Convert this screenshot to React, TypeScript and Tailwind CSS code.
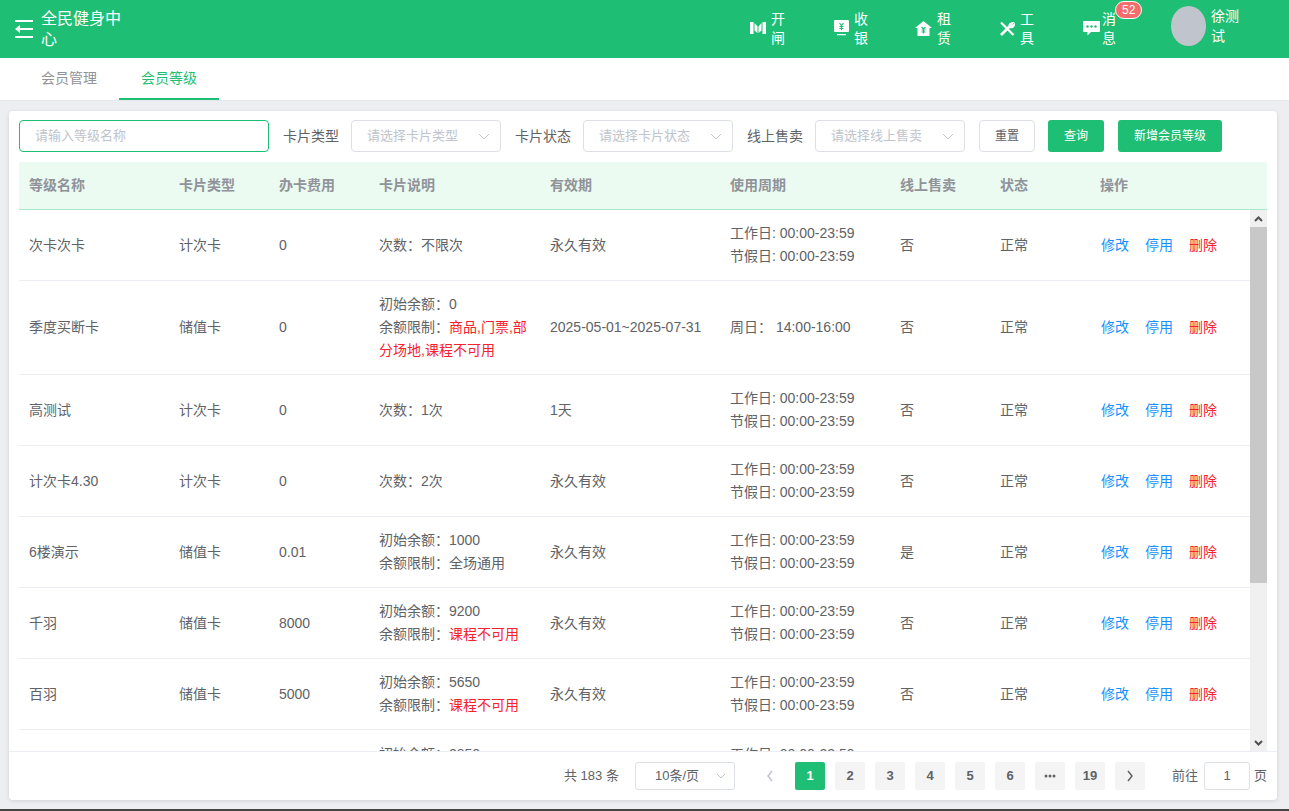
import React from "react";

const FONT = "font-['Liberation_Sans','Noto_Sans_CJK_SC',sans-serif]";

const GateIcon = () => (
  <svg width="16" height="14" viewBox="0 0 16 14" fill="white">
    <path d="M0 1h3.500v12H0zM12.500 1H16v12h-3.500zM4.500 2l3 3.500V12l-3-2.500zM11.500 2l-3 3.500V12l3-2.500z" />
  </svg>
);
const CashIcon = () => (
  <svg width="15" height="16" viewBox="0 0 15 16">
    <path fill="white" d="M1 0h13a1 1 0 0 1 1 1v10a1 1 0 0 1-1 1H1a1 1 0 0 1-1-1V1a1 1 0 0 1 1-1zM3 14h9v1.300H3z" />
    <path stroke="#1fbe75" strokeWidth="1.200" fill="none" d="M5.500 3l2 2.500 2-2.500M7.500 5.500V10M5.500 6.500h4M5.500 8.500h4" />
  </svg>
);
const HouseIcon = () => (
  <svg width="17" height="15" viewBox="0 0 17 15">
    <path fill="white" d="M8.500 0L17 7h-2.500v8h-12V7H0z" />
    <path stroke="#1fbe75" strokeWidth="1.100" fill="none" d="M6.500 6l2 2 2-2M8.500 8v4.500M6.500 9h4M6.500 11h4" />
  </svg>
);
const ToolIcon = () => (
  <svg width="15" height="15" viewBox="0 0 15 15" fill="none" stroke="white">
    <path strokeWidth="2.200" d="M1 1.500l12.500 12.500" />
    <path strokeWidth="2.600" d="M1 14l8-8" />
    <path strokeWidth="1.200" d="M9 6c-.5-2 1-4.500 4.500-4.500L11.500 4l1 1 2-2c0 3-2.500 4.500-5.500 3z" fill="white" />
  </svg>
);
const ChatIcon = () => (
  <svg width="17" height="15" viewBox="0 0 17 15">
    <path fill="white" d="M1 0h15a1 1 0 0 1 1 1v9a1 1 0 0 1-1 1H8l-3.500 3.500V11H1a1 1 0 0 1-1-1V1a1 1 0 0 1 1-1z" />
    <circle cx="4.500" cy="5.500" r="1.200" fill="#1fbe75" />
    <circle cx="8.500" cy="5.500" r="1.200" fill="#1fbe75" />
    <circle cx="12.500" cy="5.500" r="1.200" fill="#1fbe75" />
  </svg>
);
const Chevron = () => (
  <svg width="12" height="7" viewBox="0 0 12 7" fill="none" stroke="#c0c4cc" strokeWidth="1">
    <path d="M1 1l5 5 5-5" />
  </svg>
);

function NavItem({ icon, a, b }: { icon: React.ReactNode; a: string; b: string }) {
  return (
    <div className="flex items-center w-[83px]">
      <div className="w-[21px] mb-[2px] pr-[4px] flex justify-end">{icon}</div>
      <div className="w-[16px] text-[14px] leading-[19px] text-white text-center">
        <div>{a}</div>
        <div>{b}</div>
      </div>
    </div>
  );
}

function Select({ placeholder, width }: { placeholder: string; width: string }) {
  return (
    <div className={`${width} h-[32px] rounded-[4px] border border-[#dcdfe6] bg-white flex items-center justify-between pl-[15px] pr-[10px]`}>
      <span className="text-[13px] text-[#c0c4cc] whitespace-nowrap">{placeholder}</span>
      <Chevron />
    </div>
  );
}

type Row = {
  name: string;
  type: string;
  fee: string;
  desc: React.ReactNode;
  period: string;
  cycle: React.ReactNode;
  online: string;
  height: string;
};

const Weekly = (
  <>
    <div>工作日: 00:00-23:59</div>
    <div>节假日: 00:00-23:59</div>
  </>
);
const Red = ({ children }: { children: React.ReactNode }) => <span className="text-[#f5222d]">{children}</span>;

const rows: Row[] = [
  { name: "次卡次卡", type: "计次卡", fee: "0", desc: <div>次数：不限次</div>, period: "永久有效", cycle: Weekly, online: "否", height: "h-[71px]" },
  {
    name: "季度买断卡",
    type: "储值卡",
    fee: "0",
    desc: (
      <>
        <div>初始余额：0</div>
        <div>
          余额限制：<Red>商品,门票,部分场地,课程不可用</Red>
        </div>
      </>
    ),
    period: "2025-05-01~2025-07-31",
    cycle: <div>周日： 14:00-16:00</div>,
    online: "否",
    height: "h-[94px]",
  },
  { name: "高测试", type: "计次卡", fee: "0", desc: <div>次数：1次</div>, period: "1天", cycle: Weekly, online: "否", height: "h-[71px]" },
  { name: "计次卡4.30", type: "计次卡", fee: "0", desc: <div>次数：2次</div>, period: "永久有效", cycle: Weekly, online: "否", height: "h-[71px]" },
  {
    name: "6楼演示",
    type: "储值卡",
    fee: "0.01",
    desc: (
      <>
        <div>初始余额：1000</div>
        <div>余额限制：全场通用</div>
      </>
    ),
    period: "永久有效",
    cycle: Weekly,
    online: "是",
    height: "h-[71px]",
  },
  {
    name: "千羽",
    type: "储值卡",
    fee: "8000",
    desc: (
      <>
        <div>初始余额：9200</div>
        <div>
          余额限制：<Red>课程不可用</Red>
        </div>
      </>
    ),
    period: "永久有效",
    cycle: Weekly,
    online: "否",
    height: "h-[71px]",
  },
  {
    name: "百羽",
    type: "储值卡",
    fee: "5000",
    desc: (
      <>
        <div>初始余额：5650</div>
        <div>
          余额限制：<Red>课程不可用</Red>
        </div>
      </>
    ),
    period: "永久有效",
    cycle: Weekly,
    online: "否",
    height: "h-[71px]",
  },
];

const Cell = ({ w, children }: { w: string; children: React.ReactNode }) => (
  <div className={`${w} shrink-0 px-[10px] leading-[23px]`}>{children}</div>
);

function TableRow({ r }: { r: Row }) {
  return (
    <div className={`${r.height} shrink-0 flex items-center border-b border-[#ebeef5] text-[14px] text-[#606266]`}>
      <Cell w="w-[150px]">{r.name}</Cell>
      <Cell w="w-[100px]">{r.type}</Cell>
      <Cell w="w-[100px]">{r.fee}</Cell>
      <Cell w="w-[171px]">{r.desc}</Cell>
      <Cell w="w-[180px]">{r.period}</Cell>
      <Cell w="w-[170px]">{r.cycle}</Cell>
      <Cell w="w-[100px]">{r.online}</Cell>
      <Cell w="w-[100px]">正常</Cell>
      <div className="w-[150px] shrink-0 pl-[11px] flex gap-[16px] leading-[23px]">
        <span className="text-[#1890ff]">修改</span>
        <span className="text-[#1890ff]">停用</span>
        <span className="text-[#f5222d]">删除</span>
      </div>
    </div>
  );
}

const Head = ({ w, children }: { w: string; children: React.ReactNode }) => (
  <div className={`${w} shrink-0 px-[10px]`}>{children}</div>
);

function PageBtn({ children, active }: { children: React.ReactNode; active?: boolean }) {
  return (
    <div
      className={`w-[30px] h-[28px] rounded-[2px] flex items-center justify-center text-[13px] font-bold ${
        active ? "bg-[#1fbe75] text-white" : "bg-[#f4f4f5] text-[#606266]"
      }`}
    >
      {children}
    </div>
  );
}

export default function App() {
  return (
    <div className={`${FONT} w-[1289px] h-[811px] overflow-hidden bg-[#eceef2] flex flex-col`}>
      <header className="h-[58px] shrink-0 bg-[#1fbe75] flex items-center text-white">
        <div className="w-[41px] pl-[15px] shrink-0">
          <svg width="18" height="18" viewBox="0 0 18 18" fill="white">
            <path d="M0 0h18v2H0zM5 8h13v2H5zM0 16h18v2H0zM0 9l5-4v8z" />
          </svg>
        </div>
        <div className="w-[86px] text-[16px] leading-[21px]">全民健身中心</div>
        <div className="ml-[622px] flex items-center">
          <NavItem icon={<GateIcon />} a="开" b="闸" />
          <NavItem icon={<CashIcon />} a="收" b="银" />
          <NavItem icon={<HouseIcon />} a="租" b="赁" />
          <NavItem icon={<ToolIcon />} a="工" b="具" />
          <div className="relative flex items-center w-[89px]">
            <div className="w-[20px] mb-[2px] pl-[2px]">
              <ChatIcon />
            </div>
            <div className="w-[16px] text-[14px] leading-[19px] text-center">
              <div>消</div>
              <div>息</div>
            </div>
            <div className="absolute left-[34px] top-[-9px] h-[18px] px-[6px] rounded-[9px] bg-[#f56c6c] border border-white text-[12px] leading-[16px] text-white">
              52
            </div>
          </div>
          <div className="w-[35px] h-[40px] ml-[1px] mb-[6px] rounded-[50%] bg-[#c0c4cc] shrink-0" />
          <div className="ml-[5px] mb-[6px] w-[30px] text-[14px] leading-[20px]">徐测试</div>
        </div>
      </header>

      <nav className="h-[43px] shrink-0 bg-white border-b border-[#e4e7ed] flex text-[14px] pl-[19px]">
        <div className="w-[100px] h-[42px] pb-[2px] flex items-center justify-center text-[#909399]">会员管理</div>
        <div className="w-[100px] h-[42px] flex items-center justify-center text-[#1fbe75] border-b-2 border-[#1fbe75]">会员等级</div>
      </nav>

      <main className="mt-[10px] mx-[9px] w-[1268px] h-[689px] bg-white rounded-[4px] shadow-[0_1px_4px_rgba(0,0,0,0.12)] flex flex-col shrink-0 overflow-hidden">
        <div className="h-[51px] pt-[9px] px-[10px] shrink-0 flex items-start text-[14px]">
          <div className="w-[250px] h-[32px] rounded-[4px] border border-[#1fbe75] pl-[15px] flex items-center text-[13px] text-[#c0c4cc]">
            请输入等级名称
          </div>
          <span className="ml-[14px] w-[56px] leading-[32px] text-[#606266]">卡片类型</span>
          <div className="ml-[12px]"><Select placeholder="请选择卡片类型" width="w-[150px]" /></div>
          <span className="ml-[14px] w-[56px] leading-[32px] text-[#606266]">卡片状态</span>
          <div className="ml-[12px]"><Select placeholder="请选择卡片状态" width="w-[150px]" /></div>
          <span className="ml-[14px] w-[56px] leading-[32px] text-[#606266]">线上售卖</span>
          <div className="ml-[12px]"><Select placeholder="请选择线上售卖" width="w-[150px]" /></div>
          <div className="ml-[14px] w-[56px] h-[32px] rounded-[4px] border border-[#dcdfe6] flex items-center justify-center text-[12px] text-[#606266]">重置</div>
          <div className="ml-[13px] w-[56px] h-[32px] rounded-[3px] bg-[#1fbe75] flex items-center justify-center text-[12px] text-white">查询</div>
          <div className="ml-[14px] w-[104px] h-[32px] rounded-[3px] bg-[#1fbe75] flex items-center justify-center text-[12px] text-white">新增会员等级</div>
        </div>

        <div className="mx-[10px] h-[48px] shrink-0 bg-[#ebfbf1] border-b border-[#a9e8c8] flex items-center text-[14px] font-bold text-[#909399]">
          <Head w="w-[150px]">等级名称</Head>
          <Head w="w-[100px]">卡片类型</Head>
          <Head w="w-[100px]">办卡费用</Head>
          <Head w="w-[171px]">卡片说明</Head>
          <Head w="w-[180px]">有效期</Head>
          <Head w="w-[170px]">使用周期</Head>
          <Head w="w-[100px]">线上售卖</Head>
          <Head w="w-[100px]">状态</Head>
          <Head w="w-[100px]">操作</Head>
        </div>

        <div className="mx-[10px] h-[541px] shrink-0 flex overflow-hidden">
          <div className="w-[1231px] shrink-0 overflow-hidden">
            {rows.map((r) => (
              <TableRow key={r.name} r={r} />
            ))}
            <div className="h-[71px] flex items-center text-[14px] text-[#606266]">
              <div className="w-[350px] shrink-0" />
              <Cell w="w-[171px]">
                <div>初始余额：2850</div>
                <div>余额限制：课程不可用</div>
              </Cell>
              <div className="w-[180px] shrink-0" />
              <Cell w="w-[170px]">{Weekly}</Cell>
            </div>
          </div>
          <div className="w-[17px] shrink-0 bg-[#f0f0f0] flex flex-col items-center">
            <div className="h-[17px] shrink-0 flex items-center justify-center">
              <svg width="9" height="6" viewBox="0 0 9 6" fill="none" stroke="#505050" strokeWidth="2">
                <path d="M1 5l3.500-3.500L8 5" />
              </svg>
            </div>
            <div className="w-[17px] h-[356px] bg-[#c8c8c8]" />
            <div className="flex-1" />
            <div className="h-[17px] shrink-0 flex items-center justify-center">
              <svg width="9" height="6" viewBox="0 0 9 6" fill="none" stroke="#505050" strokeWidth="2">
                <path d="M1 1l3.500 3.500L8 1" />
              </svg>
            </div>
          </div>
        </div>

        <div className="flex-1 border-t border-[#ebeef5] flex items-center text-[13px] text-[#606266] pl-[555px]">
          <span className="w-[56px] whitespace-nowrap">共 183 条</span>
          <div className="ml-[15px] w-[100px] h-[28px] rounded-[3px] border border-[#dcdfe6] flex items-center justify-between pl-[19px] pr-[8px]">
            <span className="whitespace-nowrap">10条/页</span>
            <svg width="10" height="6" viewBox="0 0 10 6" fill="none" stroke="#c0c4cc"><path d="M1 1l4 4 4-4" /></svg>
          </div>
          <div className="ml-[20px] w-[30px] h-[28px] flex items-center justify-center">
            <svg width="8" height="12" viewBox="0 0 8 12" fill="none" stroke="#c0c4cc" strokeWidth="1.500"><path d="M6 1L2 6l4 5" /></svg>
          </div>
          <div className="ml-[10px] flex gap-[10px]">
            <PageBtn active>1</PageBtn>
            <PageBtn>2</PageBtn>
            <PageBtn>3</PageBtn>
            <PageBtn>4</PageBtn>
            <PageBtn>5</PageBtn>
            <PageBtn>6</PageBtn>
            <PageBtn>
              <svg width="12" height="4" viewBox="0 0 12 4" fill="#606266">
                <circle cx="2" cy="2" r="1.500" /><circle cx="6" cy="2" r="1.500" /><circle cx="10" cy="2" r="1.500" />
              </svg>
            </PageBtn>
            <PageBtn>19</PageBtn>
            <PageBtn>
              <svg width="8" height="12" viewBox="0 0 8 12" fill="none" stroke="#606266" strokeWidth="1.500"><path d="M2 1l4 5-4 5" /></svg>
            </PageBtn>
          </div>
          <span className="ml-[27px] whitespace-nowrap">前往</span>
          <div className="ml-[6px] w-[46px] h-[28px] rounded-[3px] border border-[#dcdfe6] flex items-center justify-center">1</div>
          <span className="ml-[4px]">页</span>
        </div>
      </main>
      <div className="mt-[9px] h-[2px] bg-[#444]" />
    </div>
  );
}
